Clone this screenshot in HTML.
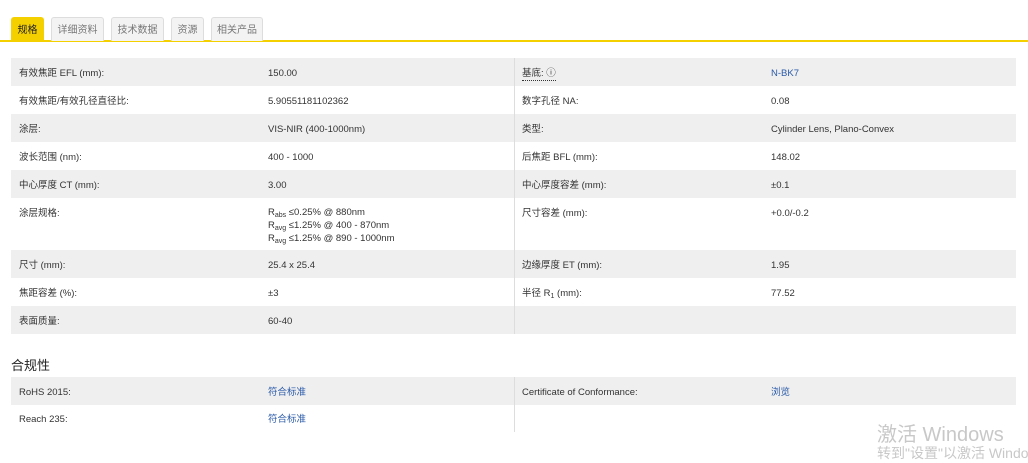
<!DOCTYPE html>
<html><head><meta charset="utf-8"><style>
body{margin:0;background:#fff;width:1028px;height:456px;overflow:hidden;font-family:"Liberation Sans","Noto Sans CJK SC",sans-serif;color:#333;font-size:9.5px}
.tabs{position:absolute;left:0;top:0;width:1028px;height:42px;border-bottom:2px solid #f5d000;box-sizing:border-box}
.tab{position:absolute;top:17px;height:24px;line-height:26px;text-align:center;background:#f3f3f3;border:1px solid #ddd;border-bottom:none;border-radius:3px 3px 0 0;color:#777;font-size:10px;box-sizing:border-box}
.tab.a{background:#f5d000;border-color:#f5d000;color:#222}
.row{position:absolute;left:11px;width:1005px;height:28px}
.g{background:#efefef}
.c{position:absolute;top:2px;line-height:28px;height:28px;white-space:nowrap}
.l1{left:8px}.v1{left:257px}.l2{left:511px}.v2{left:760px}
.sep{position:absolute;left:514px;top:58px;width:1px;height:276px;background:#ddd}
.sep2{position:absolute;left:514px;top:377px;width:1px;height:55px;background:#ddd}
a{color:#2a5aa8;text-decoration:none}
sub{font-size:7px;line-height:0;vertical-align:-2px}
</style></head><body>
<div class="tabs">
<div class="tab a" style="left:11px;width:33px">规格</div>
<div class="tab" style="left:51px;width:53px">详细资料</div>
<div class="tab" style="left:111px;width:53px">技术数据</div>
<div class="tab" style="left:171px;width:33px">资源</div>
<div class="tab" style="left:211px;width:52px">相关产品</div>
</div>
<div class="row g" style="top:58px"><span class="c l1">有效焦距 EFL (mm):</span><span class="c v1">150.00</span><span class="c l2"><span style="border-bottom:1px dotted #333;line-height:12px;display:inline-block">基底: ⓘ</span></span><span class="c v2"><a>N-BK7</a></span></div>
<div class="row" style="top:86px"><span class="c l1">有效焦距/有效孔径直径比:</span><span class="c v1">5.90551181102362</span><span class="c l2">数字孔径 NA:</span><span class="c v2">0.08</span></div>
<div class="row g" style="top:114px"><span class="c l1">涂层:</span><span class="c v1">VIS-NIR (400-1000nm)</span><span class="c l2">类型:</span><span class="c v2">Cylinder Lens, Plano-Convex</span></div>
<div class="row" style="top:142px"><span class="c l1">波长范围 (nm):</span><span class="c v1">400 - 1000</span><span class="c l2">后焦距 BFL (mm):</span><span class="c v2">148.02</span></div>
<div class="row g" style="top:170px"><span class="c l1">中心厚度 CT (mm):</span><span class="c v1">3.00</span><span class="c l2">中心厚度容差 (mm):</span><span class="c v2">±0.1</span></div>
<div class="row" style="top:198px;height:52px"><span class="c l1">涂层规格:</span><span class="c v1" style="line-height:13px;top:8px;height:auto">R<sub>abs</sub> ≤0.25% @ 880nm<br>R<sub>avg</sub> ≤1.25% @ 400 - 870nm<br>R<sub>avg</sub> ≤1.25% @ 890 - 1000nm</span><span class="c l2">尺寸容差 (mm):</span><span class="c v2">+0.0/-0.2</span></div>
<div class="row g" style="top:250px"><span class="c l1">尺寸 (mm):</span><span class="c v1">25.4 x 25.4</span><span class="c l2">边缘厚度 ET (mm):</span><span class="c v2">1.95</span></div>
<div class="row" style="top:278px"><span class="c l1">焦距容差 (%):</span><span class="c v1">±3</span><span class="c l2">半径 R<sub>1</sub> (mm):</span><span class="c v2">77.52</span></div>
<div class="row g" style="top:306px"><span class="c l1">表面质量:</span><span class="c v1">60-40</span></div>
<div class="sep"></div>
<div style="position:absolute;left:11px;top:355px;font-size:13px;color:#222">合规性</div>
<div class="row g" style="top:377px"><span class="c l1">RoHS 2015:</span><span class="c v1"><a>符合标准</a></span><span class="c l2">Certificate of Conformance:</span><span class="c v2"><a>浏览</a></span></div>
<div class="row" style="top:404px"><span class="c l1">Reach 235:</span><span class="c v1"><a>符合标准</a></span></div>
<div class="sep2"></div>
<div style="position:absolute;left:877px;top:418px;font-size:20px;color:#c8c8c8;white-space:nowrap">激活 Windows</div>
<div style="position:absolute;left:877px;top:443px;font-size:14px;color:#c8c8c8;white-space:nowrap">转到"设置"以激活 Windows。</div>
</body></html>
